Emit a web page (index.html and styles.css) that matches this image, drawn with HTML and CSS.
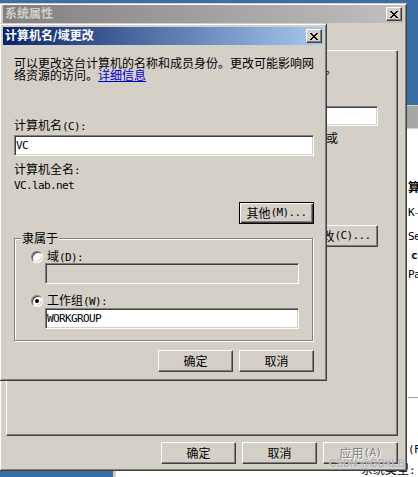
FILE: index.html
```html
<!DOCTYPE html>
<html lang="zh-CN">
<head>
<meta charset="utf-8">
<title>计算机名/域更改</title>
<link rel="stylesheet" href="styles.css">
</head>
<body>
<div class="bgwin">
  <div class="bghead"></div>
  <div class="bgbody">
    <div class="bg-suan">算</div>
    <div class="bg-krow"><span class="lat">K</span><span class="kline"></span></div>
    <div class="bg-se lat">Se</div>
    <div class="bg-c lat">c</div>
    <div class="bg-pa lat">Pa</div>
    <div class="bg-hr"></div>
    <div class="bg-f lat">(F</div>
    <div class="bg-type">系统类型<span class="lat">:</span></div>
  </div>
</div>

<div class="win outer">
  <div class="titlebar inactive">
    <span class="title">系统属性</span>
    <span class="xbtn"><svg width="8" height="7" viewBox="0 0 8 7" shape-rendering="crispEdges"><path d="M0 0h2v1h-2z M6 0h2v1h-2z M1 1h2v1h-2z M5 1h2v1h-2z M2 2h4v1h-4z M3 3h2v1h-2z M2 4h4v1h-4z M1 5h2v1h-2z M5 5h2v1h-2z M0 6h2v1h-2z M6 6h2v1h-2z" fill="#000"/></svg></span>
  </div>
  <div class="tabs"></div>
  <div class="panel">
    <div class="p-dot">。</div>
    <div class="field p-input"></div>
    <div class="p-text">或</div>
    <div class="btn p-btn">更改<span class="lat">(C)...</span></div>
  </div>
  <div class="obtns">
    <div class="btn">确定</div>
    <div class="btn">取消</div>
    <div class="btn disabled">应用<span class="lat">(A)</span></div>
  </div>
</div>

<div class="win dialog">
  <div class="titlebar active">
    <span class="title">计算机名/域更改</span>
    <span class="xbtn"><svg width="8" height="7" viewBox="0 0 8 7" shape-rendering="crispEdges"><path d="M0 0h2v1h-2z M6 0h2v1h-2z M1 1h2v1h-2z M5 1h2v1h-2z M2 2h4v1h-4z M3 3h2v1h-2z M2 4h4v1h-4z M1 5h2v1h-2z M5 5h2v1h-2z M0 6h2v1h-2z M6 6h2v1h-2z" fill="#000"/></svg></span>
  </div>
  <div class="dbody">
    <div class="desc">
      <div class="line">可以更改这台计算机的名称和成员身份。更改可能影响网</div>
      <div class="line">络资源的访问。<a class="link">详细信息</a></div>
    </div>
    <div class="lbl">计算机名<span class="lat">(C):</span></div>
    <div class="field name"><span class="lat">VC</span></div>
    <div class="lbl2">计算机全名<span class="lat">:</span></div>
    <div class="fqdn lat">VC.lab.net</div>
    <div class="btn default other">其他<span class="lat">(M)...</span></div>
    <div class="group">
      <span class="legend">隶属于</span>
      <div class="rrow"><span class="radio"></span><span>域<span class="lat">(D):</span></span></div>
      <div class="field gfield off"></div>
      <div class="rrow r2"><span class="radio on"></span><span>工作组<span class="lat">(W):</span></span></div>
      <div class="field gfield g2"><span class="lat">WORKGROUP</span></div>
    </div>
    <div class="dbtns">
      <div class="btn">确定</div>
      <div class="btn">取消</div>
    </div>
  </div>
</div>

<div class="watermark">CSDN @GDXLB</div>
</body>
</html>
```
FILE: styles.css
```css
* { box-sizing: border-box; }
html, body { margin: 0; padding: 0; }
body {
  width: 418px;
  height: 477px;
  overflow: hidden;
  position: relative;
  background: #3a6ea5;
  font-family: "Noto Sans CJK SC", sans-serif;
  font-size: 12px;
  line-height: 12px;
  color: #000;
}
.lat {
  font-family: "DejaVu Sans Mono", "Liberation Mono", monospace;
  font-size: 11px;
  letter-spacing: -0.62px;
}

/* background window on the right */
.bgwin {
  position: absolute;
  left: 113px;
  top: 105px;
  right: 0;
  bottom: 0;
  background: #fff;
  border-left: 3px solid #d4d0c8;
  display: flex;
  flex-direction: column;
}
.bghead {
  height: 24px;
  border-top: 1px solid #d4d0c8;
  border-bottom: 1px solid #d4d0c8;
  background: linear-gradient(to right, #808080, #a8a8a8);
}
.bgbody {
  display: flex;
  flex-direction: column;
  padding-left: 292px;
}
.bg-suan { margin-top: 52px; font-weight: bold; }
.bg-krow { margin-top: 14px; display: flex; align-items: center; height: 12px; }
.kline { flex: 1; height: 1px; background: #808080; margin-left: 1px; }
.bg-se { margin-top: 12px; }
.bg-c { margin-top: 7px; margin-left: 3px; font-weight: bold; }
.bg-pa { margin-top: 7px; }
.bg-hr { margin-top: 116px; height: 1px; background: #a0a0a0; }
.bg-f { margin-top: 46px; }
.bg-type { margin-top: 7px; margin-left: -47px; white-space: nowrap; }

/* windows */
.win {
  position: absolute;
  background: #d4d0c8;
  border: 1px solid;
  border-color: #d4d0c8 #404040 #404040 #d4d0c8;
  box-shadow: inset 1px 1px #fff, inset -1px -1px #808080;
  display: flex;
  flex-direction: column;
}
.outer {
  left: -1px;
  top: 3px;
  width: 408px;
  height: 468px;
  padding: 1px 3px 3px 3px;
}
.dialog {
  left: -1px;
  top: 23px;
  width: 328px;
  height: 358px;
  padding: 3px;
}
.titlebar {
  height: 18px;
  flex: none;
  display: flex;
  align-items: flex-start;
  padding: 2px 1px 0 2px;
}
.titlebar.active { background: linear-gradient(to right, #0a246a, #a6caf0); color: #fff; }
.titlebar.inactive { background: linear-gradient(to right, #808080, #c0c0c0); color: #d4d0c8; }
.title { flex: 1; font-weight: bold; white-space: nowrap; }
.xbtn {
  width: 16px;
  height: 14px;
  flex: none;
  background: #d4d0c8;
  border: 1px solid;
  border-color: #fff #404040 #404040 #fff;
  box-shadow: inset -1px -1px #808080;
  display: flex;
  align-items: center;
  justify-content: center;
  padding-right: 1px;
}
.xbtn svg { display: block; }

/* controls */
.btn {
  width: 75px;
  height: 22px;
  flex: none;
  background: #d4d0c8;
  border: 1px solid;
  border-color: #fff #404040 #404040 #fff;
  box-shadow: inset -1px -1px #808080;
  display: flex;
  align-items: center;
  justify-content: center;
  white-space: nowrap;
}
.btn.default {
  border-color: #000;
  box-shadow: inset 1px 1px #fff, inset -1px -1px #404040, inset -2px -2px #808080;
}
.btn.disabled { color: #808080; text-shadow: 1px 1px #fff; }
.field {
  height: 21px;
  flex: none;
  background: #fff;
  border: 1px solid;
  border-color: #808080 #fff #fff #808080;
  box-shadow: inset 1px 1px #404040, inset -1px -1px #d4d0c8;
  padding-left: 1px;
  display: flex;
  align-items: center;
  white-space: nowrap;
}
.field.off { background: #d4d0c8; }

/* outer window body */
.tabs { height: 27px; flex: none; }
.panel {
  margin: 0 5px 0 3px;
  height: 386px;
  flex: none;
  border: 1px solid;
  border-color: #fff #404040 #404040 #fff;
  box-shadow: inset -1px -1px #808080;
  display: flex;
  flex-direction: column;
  padding-right: 19px;
}
.p-dot { margin-top: 12px; margin-left: 318px; }
.p-input { align-self: flex-end; width: 200px; height: 20px; margin-top: 31px; }
.p-text { margin-top: 6px; margin-left: 319px; }
.p-btn { align-self: flex-end; margin-top: 81px; }
.obtns {
  display: flex;
  justify-content: flex-end;
  gap: 6px;
  margin: 6px 5px 0 0;
}

/* dialog body */
.dbody {
  display: flex;
  flex-direction: column;
  padding: 12px 9px 0 11px;
}
.desc .line { white-space: nowrap; }
.link { color: #0000cc; text-decoration: underline; }
.lbl { margin-top: 38px; }
.name { margin-top: 2px; }
.lbl2 { margin-top: 7px; }
.fqdn { margin-top: 3px; }
.other { align-self: flex-end; margin-top: 10px; }
.group {
  position: relative;
  margin: 14px 1px 0 0;
  border: 1px solid #808080;
  box-shadow: inset 1px 1px #fff, 1px 1px #fff;
  padding: 12px 13px 11px 16px;
  display: flex;
  flex-direction: column;
}
.legend {
  position: absolute;
  top: -7px;
  left: 6px;
  padding: 0 1px;
  background: #d4d0c8;
}
.rrow { display: flex; align-items: center; gap: 4px; height: 12px; }
.r2 { margin-top: 11px; }
.gfield { margin-left: 14px; padding-left: 1px; }
.g2 { margin-top: 1px; }
.radio {
  width: 12px;
  height: 12px;
  flex: none;
  position: relative;
  border-radius: 50%;
  background: #fff;
  border: 1px solid;
  border-color: #808080 #fff #fff #808080;
  box-shadow: inset 1px 1px #404040, inset -1px -1px #d4d0c8;
}
.radio.on::after {
  content: "";
  position: absolute;
  left: 3px;
  top: 3px;
  width: 4px;
  height: 4px;
  border-radius: 50%;
  background: #000;
}
.dbtns {
  display: flex;
  justify-content: flex-end;
  gap: 6px;
  margin-top: 9px;
}

.watermark {
  position: absolute;
  left: 329px;
  top: 458px;
  font-family: "Liberation Sans", sans-serif;
  font-size: 10px;
  font-weight: bold;
  line-height: 12px;
  color: rgba(150, 150, 150, 0.75);
  text-shadow: 0 0 1px #fff;
  white-space: nowrap;
}
```
